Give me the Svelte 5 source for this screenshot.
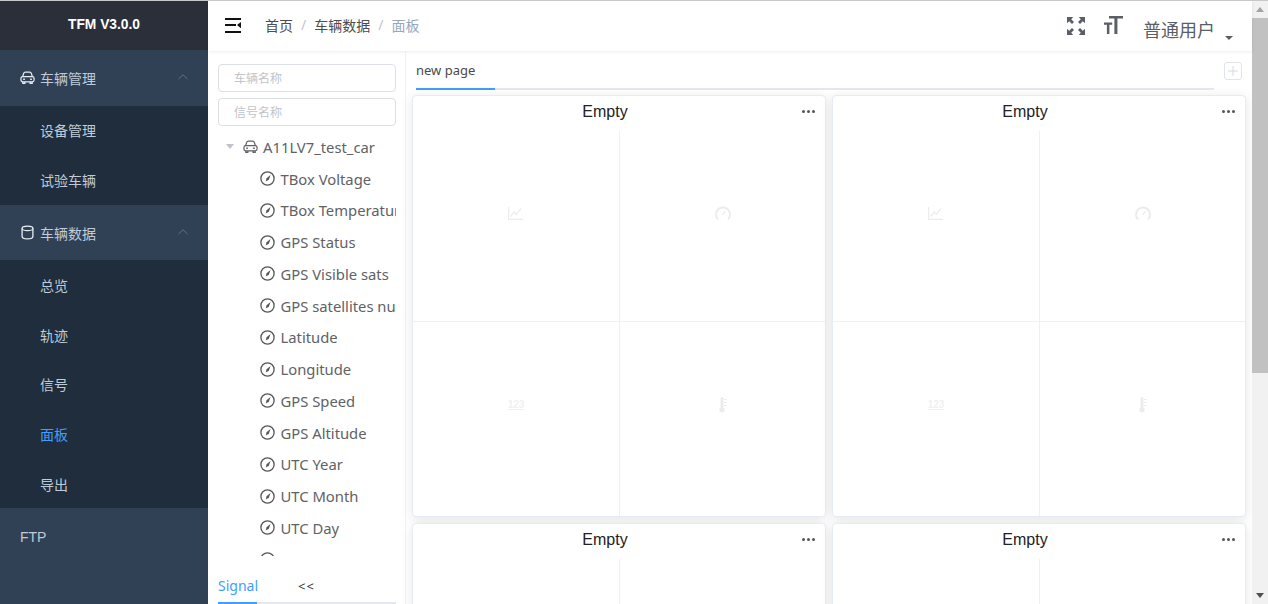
<script>
    const vehicleMenu = ['设备管理', '试验车辆']
    const dataMenu = ['总览', '轨迹', '信号', '面板', '导出']
    const signals = [
        'TBox Voltage', 'TBox Temperature', 'GPS Status', 'GPS Visible sats',
        'GPS satellites number', 'Latitude', 'Longitude', 'GPS Speed',
        'GPS Altitude', 'UTC Year', 'UTC Month', 'UTC Day', 'UTC Hour'
    ]
    const cards = [1, 2, 3, 4]
</script>

{#snippet car(size)}
    <svg width={size} height={size} viewBox="0 0 16 16" fill="none" stroke="currentColor" stroke-width="1.3">
        <path d="M2.800 7.200 3.800 3.800C4.100 2.800 4.800 2.200 5.800 2.200h4.400c1 0 1.700.6 2 1.600l1 3.400" />
        <rect x="1" y="7" width="14" height="5.600" rx="2" />
        <path d="M3 12.600v1.600h2.200v-1.600M10.800 12.600v1.600H13v-1.600" />
        <path d="M3.400 9.800h1.800M10.800 9.800h1.800" stroke-width="1.500" />
    </svg>
{/snippet}

{#snippet chevron()}
    <svg class="chevron" width="12" height="12" viewBox="0 0 12 12" fill="none" stroke="currentColor" stroke-width="1">
        <path d="M1.500 8 6 3.800 10.500 8" />
    </svg>
{/snippet}

<div class="page">
    <aside class="sidebar">
        <div class="brand">TFM V3.0.0</div>

        <div class="group">
            <span class="group-icon">{@render car(15)}</span>
            <span>车辆管理</span>
            {@render chevron()}
        </div>
        {#each vehicleMenu as item}
            <div class="item">{item}</div>
        {/each}

        <div class="group">
            <span class="group-icon">
                <svg width="15" height="15" viewBox="0 0 15 15" fill="none" stroke="currentColor" stroke-width="1.300">
                    <ellipse cx="7.500" cy="3.400" rx="5.400" ry="2.200" />
                    <path d="M2.100 3.400v8c0 1.300 2.400 2.400 5.400 2.400s5.400-1.100 5.400-2.400v-8" />
                </svg>
            </span>
            <span>车辆数据</span>
            {@render chevron()}
        </div>
        {#each dataMenu as item}
            <div class="item" class:active={item === '面板'}>{item}</div>
        {/each}

        <div class="group ftp">FTP</div>
    </aside>

    <div class="main">
        <header class="navbar">
            <svg class="hamburger" width="17" height="15" viewBox="0 0 17 15" fill="#111">
                <rect x="0" y="0" width="16" height="2" />
                <rect x="0" y="6" width="11" height="2" />
                <rect x="0" y="13" width="16" height="2" />
                <path d="M16 4v6.200L12 7z" />
            </svg>
            <nav class="crumbs">
                <span>首页</span><i>/</i><span>车辆数据</span><i>/</i><span class="current">面板</span>
            </nav>
            <div class="nav-right">
                <svg width="20" height="20" viewBox="0 0 20 20" fill="#5a5e66">
                    <path d="M1 1h6.200L5.200 3.200 8 6 6 8 3.200 5.200 1 7.200zM19 1v6.200l-2.200-2L14 8l-2-2 2.800-2.800L12.800 1zM1 19v-6.200l2.200 2L6 12l2 2-2.800 2.800 2 2.200zM19 19h-6.200l2-2.200L12 14l2-2 2.800 2.800 2.200-2z" />
                </svg>
                <svg class="font-size" width="19" height="19" viewBox="0 0 19 19" fill="#5a5e66">
                    <path d="M5 0h14v2.600h-5.600V18h-3V2.600H5zM0 6.500h8.200v2.300H5.400V18H2.900V8.800H0z" />
                </svg>
                <span class="user">普通用户</span>
                <span class="caret"></span>
            </div>
        </header>

        <div class="content">
            <section class="tree-panel">
                <div class="fake-input">车辆名称</div>
                <div class="fake-input second">信号名称</div>

                <div class="tree">
                    <div class="tree-root">
                        <span class="tree-arrow"></span>
                        <span class="tree-car">{@render car(15)}</span>
                        <span>A11LV7_test_car</span>
                    </div>
                    {#each signals as signal}
                        <div class="tree-leaf">
                            <svg width="15" height="15" viewBox="0 0 15 15" fill="none" stroke="#555" stroke-width="1.300">
                                <circle cx="7.500" cy="7.500" r="6.600" />
                                <path d="M10.600 4 8.800 8.800 5.800 10.600 6.500 7.200z" fill="#555" stroke="none" />
                            </svg>
                            <span>{signal}</span>
                        </div>
                    {/each}
                </div>

                <div class="bottom-tabs">
                    <span class="tab-signal">Signal</span>
                    <span class="tab-collapse">&lt;&lt;</span>
                </div>
            </section>

            <section class="board">
                <div class="board-tabs">
                    <div class="tab-line">
                        <span class="tab-name">new page</span>
                    </div>
                    <span class="add-tab">
                        <svg width="10" height="10" viewBox="0 0 10 10" stroke="#d5d9e2" stroke-width="1">
                            <path d="M5 0v10M0 5h10" />
                        </svg>
                    </span>
                </div>

                <div class="cards">
                    {#each cards as card}
                        <div class="card">
                            <div class="card-title">
                                <span>Empty</span>
                                <span class="dots"><b></b><b></b><b></b></span>
                            </div>
                            <div class="quads">
                                <div class="quad">
                                    <svg class="chart" width="15" height="13" viewBox="0 0 15 13" fill="none" stroke="currentColor" stroke-width="1.200">
                                        <path d="M.6 0v12.400H15M2.600 9.600 6 4.800l2.400 2.600L13 1.400" />
                                    </svg>
                                </div>
                                <div class="quad">
                                    <svg width="16" height="15" viewBox="0 0 16 15" fill="none" stroke="currentColor" stroke-width="2">
                                        <path d="M3 13.400A7 7 0 1 1 13 13.400" />
                                        <path d="M7.600 9 10.400 4.800" stroke-width="1.200" />
                                    </svg>
                                </div>
                                <div class="quad"><span class="numeric">123</span></div>
                                <div class="quad">
                                    <svg width="8" height="16" viewBox="0 0 8 16" fill="currentColor">
                                        <path d="M1.600 1.400a1.400 1.400 0 0 1 2.800 0v9a2.700 2.700 0 1 1-2.800 0z" />
                                        <path d="M5 2h2.600v1H5zM5 5h2.600v1H5zM5 8h2.600v1H5z" />
                                    </svg>
                                </div>
                            </div>
                        </div>
                    {/each}
                </div>
            </section>
        </div>
    </div>

    <div class="scrollbar">
        <span class="arrow up"></span>
        <span class="thumb"></span>
        <span class="arrow down"></span>
    </div>
</div>

<style>
    :global(body) {
        margin: 0;
        overflow: hidden;
    }
    .page {
        display: flex;
        height: 604px;
        overflow: hidden;
        font-family: "Noto Sans", "Noto Sans CJK SC", sans-serif;
        border-top: 1px solid #c8c8c8;
        box-sizing: border-box;
    }

    .sidebar {
        flex: 0 0 208px;
        background: #1f2d3d;
        color: #bfcbd9;
        font-size: 14px;
        font-family: "Noto Sans CJK SC", sans-serif;
    }
    .brand {
        height: 49px;
        background: #2b2f3a;
        color: #fff;
        font: bold 13.800px/48px "Liberation Sans", sans-serif;
        text-align: center;
    }
    .group {
        display: flex;
        align-items: center;
        height: 55.600px;
        padding: 0 19px 0 20px;
        background: #304156;
    }
    .group-icon {
        display: flex;
        width: 20px;
        color: #e8edf2;
    }
    .chevron {
        margin-left: auto;
        margin-top: -1px;
        color: #5f7084;
    }
    .ftp {
        height: 96px;
        align-items: flex-start;
        padding-top: 21px;
        box-sizing: border-box;
        font: 14px "Liberation Sans", sans-serif;
    }
    .item {
        display: flex;
        align-items: center;
        height: 49.600px;
        padding-left: 40px;
    }
    .item.active {
        color: #409eff;
    }

    .main {
        flex: 1;
        min-width: 0;
    }
    .navbar {
        display: flex;
        align-items: center;
        height: 50px;
        padding-left: 17px;
        box-sizing: border-box;
        position: relative;
        background: #fff;
        box-shadow: 0 1px 3px rgba(0, 21, 41, 0.08);
    }
    .hamburger {
        margin-top: -2px;
    }
    .crumbs {
        display: flex;
        margin-left: 23px;
        margin-top: -2px;
        font-size: 14px;
        color: #4d4d4d;
    }
    .crumbs i {
        margin: 0 8px;
        font-style: normal;
        color: #c0c4cc;
    }
    .current {
        color: #97a8be;
    }
    .nav-right {
        display: flex;
        align-items: center;
        margin-left: auto;
        margin-right: 19px;
        color: #5a5e66;
    }
    .font-size {
        margin-left: 18px;
        margin-top: -2px;
    }
    .user {
        margin-left: 20px;
        margin-top: 6px;
        font-size: 18px;
    }
    .caret {
        margin-left: 10px;
        margin-top: 23px;
        border: 4px solid transparent;
        border-top: 4px solid #5a5e66;
        border-bottom: 0;
    }

    .content {
        display: flex;
        height: 553px;
    }
    .tree-panel {
        display: flex;
        flex-direction: column;
        flex: 0 0 178px;
        padding: 13px 9px 0 10px;
        border-right: 1px solid #f2f2f2;
        overflow: hidden;
    }
    .fake-input {
        flex: none;
        height: 28px;
        line-height: 27px;
        margin-bottom: 6px;
        padding-left: 15px;
        box-sizing: border-box;
        border: 1px solid #dcdfe6;
        border-radius: 4px;
        font-size: 12px;
        color: #c0c4cc;
    }
    .fake-input.second {
        margin-bottom: 5px;
    }
    .tree {
        flex: none;
        height: 425px;
        overflow: hidden;
        font-size: 14.800px;
        color: #606266;
    }
    .tree-root,
    .tree-leaf {
        display: flex;
        align-items: center;
        height: 31.750px;
        white-space: nowrap;
    }
    .tree-leaf {
        padding-left: 42px;
    }
    .tree-leaf svg {
        flex: none;
        margin-right: 5.500px;
    }
    .tree-arrow {
        margin-left: 8px;
        border: 4px solid transparent;
        border-top: 5px solid #c0c4cc;
        border-bottom: 0;
    }
    .tree-car {
        display: flex;
        margin: 0 5px 0 9px;
    }
    .bottom-tabs {
        display: flex;
        flex: none;
        height: 34px;
        margin-top: 14px;
        font-size: 14px;
        line-height: 32px;
        border-bottom: 2px solid #e4e7ed;
        box-sizing: border-box;
    }
    .tab-signal {
        width: 39px;
        height: 34px;
        box-sizing: border-box;
        border-bottom: 2px solid #409eff;
        color: #409eff;
    }
    .tab-collapse {
        margin-left: 41px;
        font-size: 13px;
        color: #303133;
        letter-spacing: 1px;
    }

    .board {
        flex: 1;
        min-width: 0;
        padding: 0 6px 0 6px;
        background: #fff;
    }
    .board-tabs {
        display: flex;
        height: 44px;
        padding-left: 4px;
    }
    .tab-line {
        flex: none;
        width: 798px;
        height: 39px;
        border-bottom: 2px solid #e4e7ed;
        box-sizing: border-box;
    }
    .tab-name {
        display: block;
        width: 79px;
        height: 39px;
        line-height: 38px;
        box-sizing: border-box;
        border-bottom: 2px solid #409eff;
        font-size: 13px;
        color: #4a4a4a;
    }
    .add-tab {
        display: flex;
        align-items: center;
        justify-content: center;
        width: 18px;
        height: 18px;
        margin: 11px 0 0 10px;
        box-sizing: border-box;
        border: 1px solid #dfe4ed;
        border-radius: 3px;
    }
    .cards {
        display: grid;
        grid-template-columns: 414px 414px;
        grid-auto-rows: 422px;
        gap: 6px;
    }
    .card {
        display: flex;
        flex-direction: column;
        box-sizing: border-box;
        border: 1px solid #e6ebf5;
        border-radius: 4px;
        box-shadow: 0 2px 12px rgba(0, 0, 0, 0.1);
        background: #fff;
    }
    .card-title {
        flex: none;
        position: relative;
        height: 35px;
        padding-right: 28px;
        font: 16px/31px "Liberation Sans", sans-serif;
        color: #222;
        text-align: center;
    }
    .dots {
        position: absolute;
        top: 14px;
        right: 10px;
        display: flex;
        gap: 2px;
    }
    .dots b {
        width: 3px;
        height: 3px;
        border-radius: 50%;
        background: #555;
    }
    .quads {
        flex: 1;
        display: grid;
        grid-template-columns: 1fr 1fr;
        grid-template-rows: 190.500px 1fr;
        color: #ececec;
    }
    .quad {
        display: flex;
        align-items: center;
        justify-content: center;
        border-color: #f0f0f0;
        border-style: solid;
        border-width: 0;
        padding-bottom: 28px;
    }
    .quad:nth-child(even) {
        border-left-width: 1px;
    }
    .quad:nth-child(-n + 2) {
        border-bottom-width: 1px;
        padding-bottom: 25px;
    }
    .chart {
        margin-right: 2px;
    }
    .numeric {
        font: bold 10px "Liberation Sans", sans-serif;
        color: #f0f0f0;
        text-decoration: underline;
    }

    .scrollbar {
        flex: 0 0 16px;
        display: flex;
        flex-direction: column;
        align-items: center;
        background: #f1f1f1;
    }
    .arrow {
        flex: none;
        margin: 6px 0;
        border: 4px solid transparent;
    }
    .arrow.up {
        border-top: 0;
        border-bottom: 5px solid #a3a3a3;
    }
    .arrow.down {
        margin-top: auto;
        border-bottom: 0;
        border-top: 5px solid #505050;
    }
    .thumb {
        width: 100%;
        height: 355px;
        background: #c1c1c1;
    }
</style>
